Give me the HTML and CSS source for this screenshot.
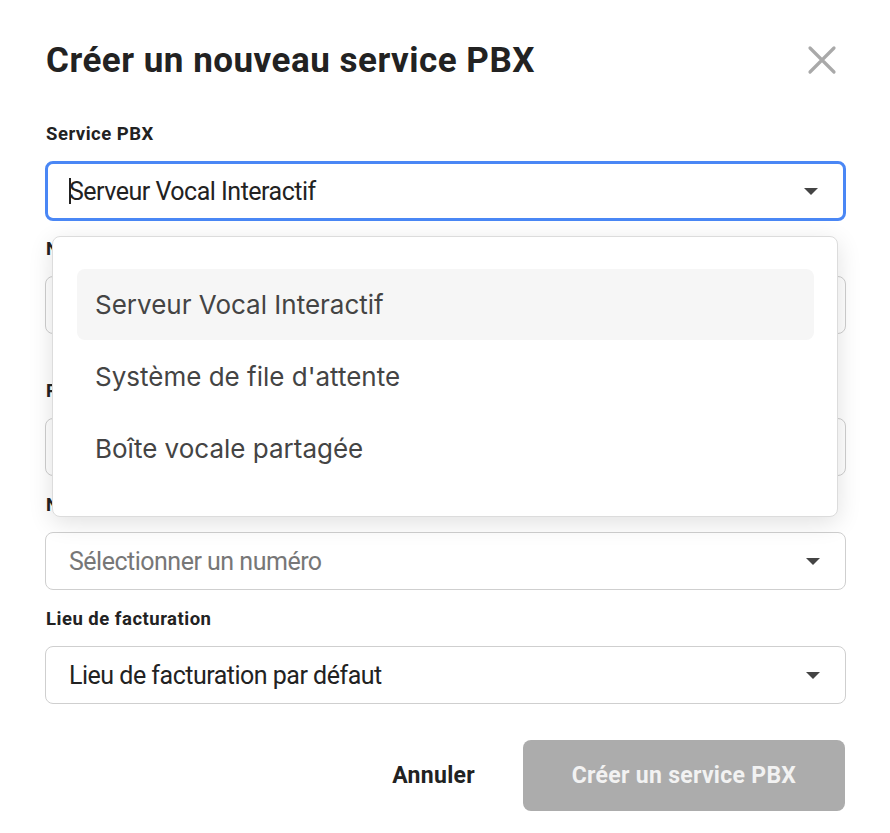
FILE: index.html
```html
<!DOCTYPE html>
<html lang="fr">
<head>
<meta charset="utf-8">
<link rel="stylesheet" href="styles.css">
</head>
<body>
<div class="modal">
  <div class="header">
    <h1 class="title">Créer un nouveau service PBX</h1>
    <button class="close" aria-label="Fermer">
      <svg width="30" height="30" viewBox="0 0 30 30"><path d="M3 3 L27 27 M27 3 L3 27" stroke="#a9a9a9" stroke-width="3.2" stroke-linecap="round" fill="none"/></svg>
    </button>
  </div>
  <form class="form">
    <div class="field">
      <label class="label">Service PBX</label>
      <div class="select focused">
        <span class="caret"></span>
        <span class="value">Serveur Vocal Interactif</span>
        <span class="arrow"></span>
      </div>
      <div class="menu">
        <div class="option active">Serveur Vocal Interactif</div>
        <div class="option">Système de file d'attente</div>
        <div class="option">Boîte vocale partagée</div>
      </div>
    </div>
    <div class="field field-help">
      <label class="label">Nom</label>
      <div class="select"><span class="value"></span></div>
    </div>
    <div class="field">
      <label class="label">Préfixe</label>
      <div class="select"><span class="value"></span></div>
    </div>
    <div class="field">
      <label class="label">Numéro</label>
      <div class="select">
        <span class="value placeholder">Sélectionner un numéro</span>
        <span class="arrow"></span>
      </div>
    </div>
    <div class="field">
      <label class="label">Lieu de facturation</label>
      <div class="select">
        <span class="value">Lieu de facturation par défaut</span>
        <span class="arrow"></span>
      </div>
    </div>
    <div class="actions">
      <button type="button" class="btn-cancel">Annuler</button>
      <button type="button" class="btn-primary">Créer un service PBX</button>
    </div>
  </form>
</div>
</body>
</html>
```
FILE: styles.css
```css
* { box-sizing: border-box; }
html, body { margin: 0; padding: 0; background: #fff; }
body { font-family: Roboto, "Noto Sans", sans-serif; color: #222; }

.modal { width: 890px; padding: 36px 44px 0 45px; }

.header { display: flex; justify-content: space-between; align-items: center; height: 48px; }
.title { margin: 0 0 0 1px; font-size: 35px; font-weight: 700; color: #222; letter-spacing: 0.5px; }
.close { border: 0; background: none; padding: 0; margin-right: 9px; width: 30px; height: 30px; cursor: pointer; }
.close svg { display: block; }

.form { margin-top: 39px; display: flex; flex-direction: column; }
.field { position: relative; display: flex; flex-direction: column; margin-bottom: 18px; }
.field-help { margin-bottom: 46px; }
.label { font-size: 18.5px; font-weight: 700; color: #222; line-height: 22px; letter-spacing: 0.5px; margin-left: 1px; margin-bottom: 16px; }

.select { position: relative; height: 58px; flex: none; border: 1.5px solid #cfcfcf; border-radius: 8px; display: flex; align-items: center; padding: 0 22px 0 23px; }
.select.focused { height: 60px; border: 3px solid #4a87f5; padding-left: 21px; margin-bottom: -1px; }
.value { flex: 1; font-size: 25px; color: #222; letter-spacing: -0.5px; }
.value.placeholder { color: #777; }
.caret { position: absolute; left: 21px; top: 14px; width: 1.5px; height: 26px; background: #222; }
.arrow { width: 0; height: 0; border-left: 7px solid transparent; border-right: 7px solid transparent; border-top: 7px solid #444; margin-right: 3px; }

.menu { position: absolute; left: 7px; right: 8px; top: 113px; z-index: 10; background: #fff; border: 1.5px solid #dcdcdc; border-radius: 8px; box-shadow: 0 6px 24px rgba(0,0,0,0.12); padding: 31.5px 23px 31.5px 24px; display: flex; flex-direction: column; }
.option { height: 72px; display: flex; align-items: center; padding-left: 18px; border-radius: 8px; font-family: Inter, Roboto, sans-serif; font-size: 26px; color: #444; }
.option.active { background: #f6f6f6; height: 71px; margin-bottom: 1px; }

.actions { display: flex; justify-content: flex-end; align-items: center; margin-top: 18px; padding-right: 1px; gap: 48px; }
.btn-cancel { border: 0; background: none; padding: 0; font-family: Roboto, sans-serif; font-size: 23px; font-weight: 700; color: #222; letter-spacing: 0.3px; }
.btn-primary { width: 322px; height: 71px; border: 0; border-radius: 8px; background: #acacac; color: #f2f2f2; font-family: Roboto, sans-serif; font-size: 23px; font-weight: 700; letter-spacing: 0.3px; }
```
